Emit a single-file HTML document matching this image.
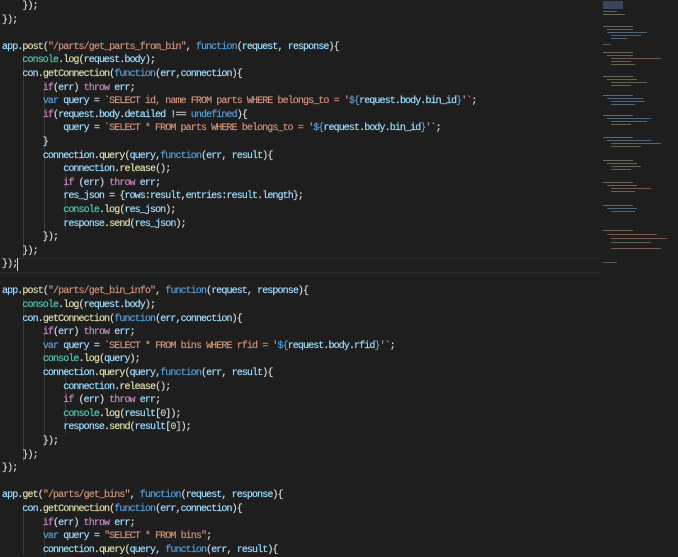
<!DOCTYPE html><html><head><style>
body{margin:0;width:678px;height:555px;background:#1e1e1e;overflow:hidden;position:relative}
#code{position:absolute;left:2px;top:0;font-family:"Liberation Mono",monospace;font-size:10px;letter-spacing:-0.9px;line-height:13.6px;color:#d4d4d4;white-space:pre;-webkit-text-stroke:0.2px}
.k{color:#569cd6}.c{color:#c586c0}.s{color:#ce9178}.f{color:#dcdcaa}.v{color:#9cdcfe}.t{color:#4ec9b0}
.hl{position:absolute;left:0;top:258px;width:600px;height:13px;border-top:1px solid #2c2c2c;border-bottom:1px solid #2c2c2c}
.g{position:absolute;width:1px;background:#3a3a3a}
#mm{position:absolute;left:600px;top:0;width:78px;height:555px;background:#1e1e1e}
#mm div{position:absolute;height:1px;opacity:.8}
.cur{position:absolute;left:17px;top:258px;width:1px;height:13px;background:#d4d4d4}
</style></head><body>
<div class="hl"></div>
<div class="g" style="left:23px;top:54px;height:204px"></div>
<div class="g" style="left:44px;top:81px;height:163px"></div>
<div class="g" style="left:65px;top:163px;height:68px"></div>
<div class="g" style="left:23px;top:299px;height:163px"></div>
<div class="g" style="left:44px;top:326px;height:122px"></div>
<div class="g" style="left:65px;top:367px;height:68px"></div>
<div class="g" style="left:23px;top:503px;height:52px"></div>
<div class="g" style="left:44px;top:517px;height:38px"></div>
<div class="cur"></div>
<div id="code">    });
});

<span class="v">app</span>.<span class="f">post</span>(<span class="s">"/parts/get_parts_from_bin"</span>, <span class="k">function</span>(<span class="v">request</span>, <span class="v">response</span>){
    <span class="t">console</span>.<span class="f">log</span>(<span class="v">request</span>.<span class="v">body</span>);
    <span class="v">con</span>.<span class="f">getConnection</span>(<span class="k">function</span>(<span class="v">err</span>,<span class="v">connection</span>){
        <span class="c">if</span>(<span class="v">err</span>) <span class="c">throw</span> <span class="v">err</span>;
        <span class="k">var</span> <span class="v">query</span> = <span class="s">`SELECT id, name FROM parts WHERE belongs_to = '</span><span class="k">${</span><span class="v">request</span>.<span class="v">body</span>.<span class="v">bin_id</span><span class="k">}</span><span class="s">'`</span>;
        <span class="c">if</span>(<span class="v">request</span>.<span class="v">body</span>.<span class="v">detailed</span> !== <span class="k">undefined</span>){
            <span class="v">query</span> = <span class="s">`SELECT * FROM parts WHERE belongs_to = '</span><span class="k">${</span><span class="v">request</span>.<span class="v">body</span>.<span class="v">bin_id</span><span class="k">}</span><span class="s">'`</span>;
        }
        <span class="v">connection</span>.<span class="f">query</span>(<span class="v">query</span>,<span class="k">function</span>(<span class="v">err</span>, <span class="v">result</span>){
            <span class="v">connection</span>.<span class="f">release</span>();
            <span class="c">if</span> (<span class="v">err</span>) <span class="c">throw</span> <span class="v">err</span>;
            <span class="v">res_json</span> = {<span class="v">rows</span>:<span class="v">result</span>,<span class="v">entries</span>:<span class="v">result</span>.<span class="v">length</span>};
            <span class="t">console</span>.<span class="f">log</span>(<span class="v">res_json</span>);
            <span class="v">response</span>.<span class="f">send</span>(<span class="v">res_json</span>);
        });
    });
});

<span class="v">app</span>.<span class="f">post</span>(<span class="s">"/parts/get_bin_info"</span>, <span class="k">function</span>(<span class="v">request</span>, <span class="v">response</span>){
    <span class="t">console</span>.<span class="f">log</span>(<span class="v">request</span>.<span class="v">body</span>);
    <span class="v">con</span>.<span class="f">getConnection</span>(<span class="k">function</span>(<span class="v">err</span>,<span class="v">connection</span>){
        <span class="c">if</span>(<span class="v">err</span>) <span class="c">throw</span> <span class="v">err</span>;
        <span class="k">var</span> <span class="v">query</span> = <span class="s">`SELECT * FROM bins WHERE rfid = '</span><span class="k">${</span><span class="v">request</span>.<span class="v">body</span>.<span class="v">rfid</span><span class="k">}</span><span class="s">'`</span>;
        <span class="t">console</span>.<span class="f">log</span>(<span class="v">query</span>);
        <span class="v">connection</span>.<span class="f">query</span>(<span class="v">query</span>,<span class="k">function</span>(<span class="v">err</span>, <span class="v">result</span>){
            <span class="v">connection</span>.<span class="f">release</span>();
            <span class="c">if</span> (<span class="v">err</span>) <span class="c">throw</span> <span class="v">err</span>;
            <span class="t">console</span>.<span class="f">log</span>(<span class="v">result</span>[<span style="color:#b5cea8">0</span>]);
            <span class="v">response</span>.<span class="f">send</span>(<span class="v">result</span>[<span style="color:#b5cea8">0</span>]);
        });
    });
});

<span class="v">app</span>.<span class="f">get</span>(<span class="s">"/parts/get_bins"</span>, <span class="k">function</span>(<span class="v">request</span>, <span class="v">response</span>){
    <span class="v">con</span>.<span class="f">getConnection</span>(<span class="k">function</span>(<span class="v">err</span>,<span class="v">connection</span>){
        <span class="c">if</span>(<span class="v">err</span>) <span class="c">throw</span> <span class="v">err</span>;
        <span class="k">var</span> <span class="v">query</span> = <span class="s">"SELECT * FROM bins"</span>;
        <span class="v">connection</span>.<span class="f">query</span>(<span class="v">query</span>, <span class="k">function</span>(<span class="v">err</span>, <span class="v">result</span>){
</div>
<div id="mm">
<div style="left:3px;top:1px;width:20px;height:8px;background:#3d4f66"></div>
<div style="left:3px;top:11px;width:14px;background:#5a7890"></div>
<div style="left:3px;top:14px;width:22px;background:#7a7a6a"></div>
<div style="left:3px;top:26px;width:30px;background:#7a7a6a"></div>
<div style="left:7px;top:29px;width:26px;background:#5a7890"></div>
<div style="left:7px;top:32px;width:40px;background:#5a7890"></div>
<div style="left:11px;top:35px;width:30px;background:#6a6a7a"></div>
<div style="left:11px;top:38px;width:16px;background:#5a7890"></div>
<div style="left:3px;top:44px;width:8px;background:#666"></div>
<div style="left:3px;top:52px;width:30px;background:#7a7a6a"></div>
<div style="left:7px;top:55px;width:26px;background:#5a7890"></div>
<div style="left:11px;top:58px;width:50px;background:#8a6a5a"></div>
<div style="left:11px;top:61px;width:20px;background:#5a7890"></div>
<div style="left:11px;top:64px;width:24px;background:#6a7a5a"></div>
<div style="left:3px;top:76px;width:30px;background:#7a7a6a"></div>
<div style="left:7px;top:79px;width:30px;background:#5a7890"></div>
<div style="left:11px;top:82px;width:36px;background:#6a7a5a"></div>
<div style="left:11px;top:85px;width:20px;background:#5a7890"></div>
<div style="left:3px;top:95px;width:30px;background:#7a7a6a"></div>
<div style="left:7px;top:98px;width:36px;background:#5a7890"></div>
<div style="left:11px;top:101px;width:34px;background:#6a7a5a"></div>
<div style="left:11px;top:104px;width:24px;background:#5a7890"></div>
<div style="left:3px;top:115px;width:30px;background:#7a7a6a"></div>
<div style="left:7px;top:118px;width:44px;background:#5a7890"></div>
<div style="left:11px;top:121px;width:36px;background:#8a6a5a"></div>
<div style="left:11px;top:124px;width:20px;background:#6a7a5a"></div>
<div style="left:3px;top:137px;width:30px;background:#7a7a6a"></div>
<div style="left:7px;top:140px;width:44px;background:#5a7890"></div>
<div style="left:11px;top:143px;width:50px;background:#8a6a5a"></div>
<div style="left:11px;top:146px;width:30px;background:#6a7a5a"></div>
<div style="left:3px;top:160px;width:30px;background:#7a7a6a"></div>
<div style="left:7px;top:163px;width:30px;background:#5a7890"></div>
<div style="left:11px;top:166px;width:30px;background:#6a7a5a"></div>
<div style="left:11px;top:169px;width:20px;background:#5a7890"></div>
<div style="left:3px;top:182px;width:30px;background:#7a7a6a"></div>
<div style="left:7px;top:185px;width:30px;background:#5a7890"></div>
<div style="left:11px;top:188px;width:40px;background:#8a6a5a"></div>
<div style="left:11px;top:191px;width:24px;background:#6a7a5a"></div>
<div style="left:3px;top:205px;width:30px;background:#7a7a6a"></div>
<div style="left:7px;top:208px;width:30px;background:#5a7890"></div>
<div style="left:11px;top:211px;width:24px;background:#6a7a5a"></div>
<div style="left:3px;top:230px;width:30px;background:#7a7a6a"></div>
<div style="left:7px;top:234px;width:50px;background:#8a6a5a"></div>
<div style="left:11px;top:238px;width:56px;background:#8a6a5a"></div>
<div style="left:11px;top:242px;width:40px;background:#6a7a5a"></div>
<div style="left:11px;top:248px;width:50px;background:#8a6a5a"></div>
<div style="left:3px;top:262px;width:14px;background:#666"></div>
</div>
</body></html>
